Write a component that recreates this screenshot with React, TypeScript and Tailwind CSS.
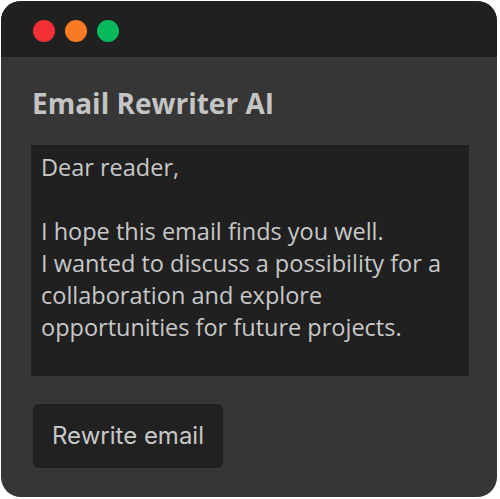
import React from "react";

export default function App() {
  return (
    <div className="w-[500px] h-[499px] bg-white p-[1px]">
      <div className="w-[496px] h-[496px] rounded-[20px] overflow-hidden bg-[#363636] flex flex-col">
        <div className="h-[56px] bg-[#202020] flex items-center gap-[10px] pl-[32px] pt-[4px] shrink-0">
          <span className="w-[22px] h-[22px] rounded-full bg-[#f42f36]" />
          <span className="w-[22px] h-[22px] rounded-full bg-[#f77a24]" />
          <span className="w-[22px] h-[22px] rounded-full bg-[#06bb5c]" />
        </div>
        <div className="flex flex-col pl-[30px]">
          <h1
            className="mt-[26px] ml-[1px] h-[40px] leading-[40px] text-[28px] font-bold text-[#c4c4c4]"
            style={{ fontFamily: '"Open Sans", sans-serif' }}
          >
            Email Rewriter AI
          </h1>
          <div
            className="mt-[22px] w-[438px] h-[231px] bg-[#202020] px-[10px] pt-[6px] text-[23.5px] leading-[32px] text-[#c8c8c8]"
            style={{ fontFamily: '"Open Sans", sans-serif' }}
          >
            <div>Dear reader,</div>
            <div>&nbsp;</div>
            <div>I hope this email finds you well.</div>
            <div>I wanted to discuss a possibility for a</div>
            <div>collaboration and explore</div>
            <div>opportunities for future projects.</div>
          </div>
          <button
            className="mt-[28px] ml-[2px] w-[190px] h-[64px] rounded-[5px] bg-[#212121] text-[24px] text-[#c8c8c8] flex items-center justify-center"
            style={{ fontFamily: 'Inter, sans-serif' }}
          >
            Rewrite email
          </button>
        </div>
      </div>
    </div>
  );
}
